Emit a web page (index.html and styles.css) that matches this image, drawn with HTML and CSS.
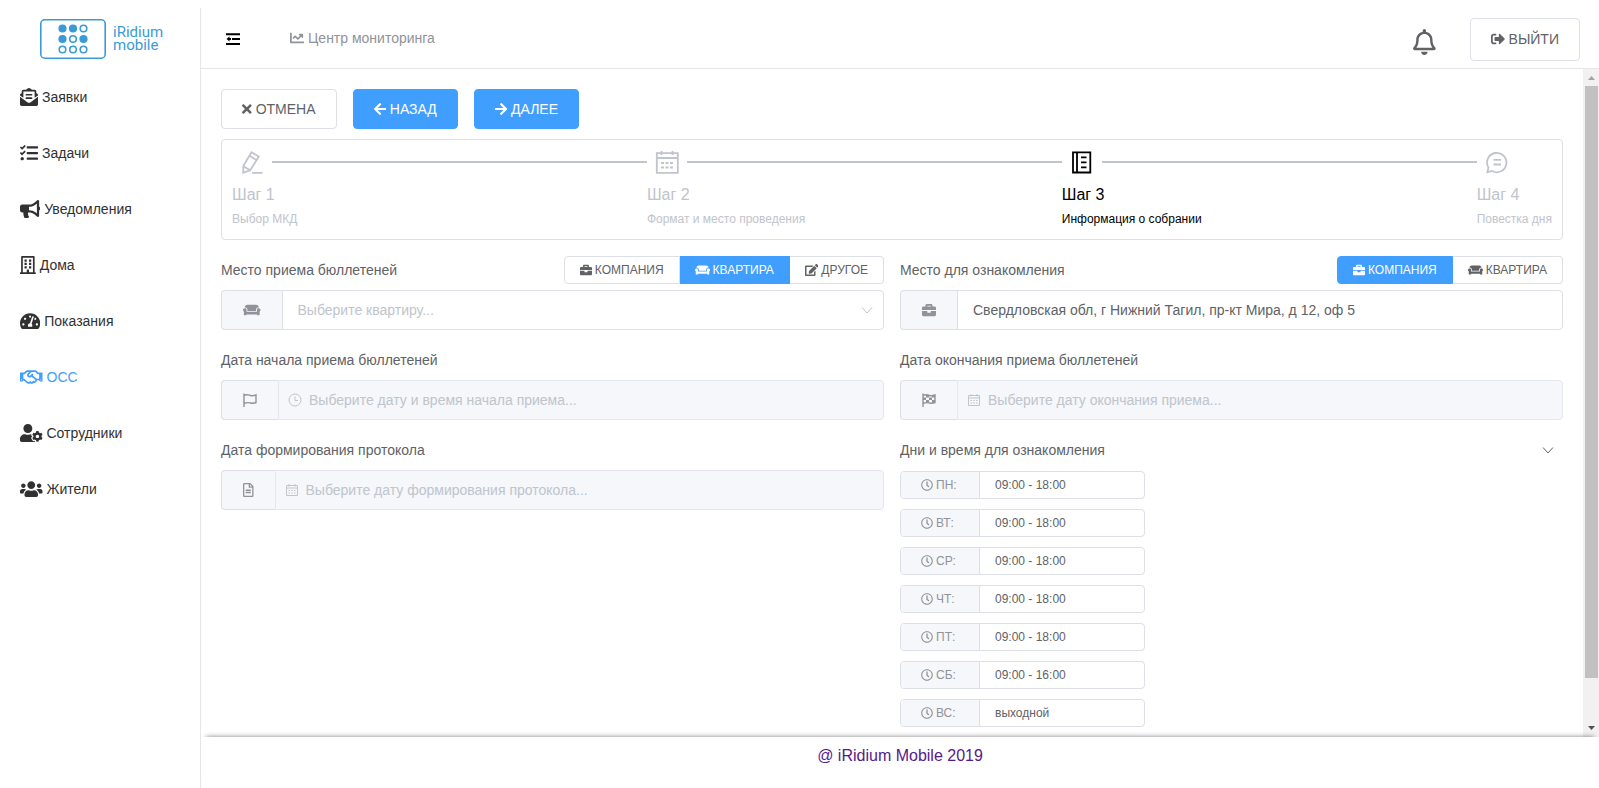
FILE: index.html
```html
<!DOCTYPE html>
<html lang="ru">
<head>
<meta charset="utf-8">
<title>iRidium mobile — ОСС</title>
<link rel="stylesheet" href="styles.css">
</head>
<body>
<svg class="sprite" aria-hidden="true">
  <defs>
    <path id="i-briefcase" d="M320 336c0 8.840-7.160 16-16 16h-96c-8.840 0-16-7.160-16-16v-48H0v144c0 25.600 22.400 48 48 48h416c25.600 0 48-22.400 48-48V288H320v48zm144-208h-80V80c0-25.600-22.400-48-48-48H176c-25.600 0-48 22.400-48 48v48H48c-25.600 0-48 22.400-48 48v80h512v-80c0-25.600-22.400-48-48-48zm-144 0H192V96h128v32z"/>
    <path id="i-couch" d="M160 224v64h320v-64c0-35.300 28.700-64 64-64h32c0-53-43-96-96-96H160c-53 0-96 43-96 96h32c35.300 0 64 28.700 64 64zm416-32h-32c-17.700 0-32 14.300-32 32v96H128v-96c0-17.700-14.300-32-32-32H64c-35.300 0-64 28.700-64 64 0 23.600 13 44 32 55.100V432c0 8.800 7.200 16 16 16h64c8.800 0 16-7.200 16-16v-16h384v16c0 8.800 7.200 16 16 16h64c8.800 0 16-7.200 16-16V311.100c19-11.100 32-31.500 32-55.100 0-35.300-28.700-64-64-64z"/>
    <path id="i-clock" d="M256 8C119 8 8 119 8 256s111 248 248 248 248-111 248-248S393 8 256 8zm0 448c-110.500 0-200-89.500-200-200S145.500 56 256 56s200 89.500 200 200-89.500 200-200 200zm61.800-104.400l-84.900-61.700c-3.100-2.300-4.900-5.900-4.900-9.700V116c0-6.600 5.400-12 12-12h32c6.600 0 12 5.400 12 12v141.700l66.800 48.600c5.400 3.900 6.500 11.400 2.600 16.800L334.600 349c-3.900 5.300-11.400 6.500-16.800 2.600z"/>
    <path id="i-arrow" d="M257.500 445.100l-22.200 22.200c-9.400 9.400-24.600 9.400-33.900 0L7 273c-9.400-9.400-9.400-24.600 0-33.900L201.400 44.700c9.400-9.400 24.600-9.400 33.900 0l22.200 22.200c9.500 9.500 9.300 25-.4 34.300L136.600 216H424c13.300 0 24 10.700 24 24v32c0 13.300-10.700 24-24 24H136.600l120.500 114.800c9.800 9.300 10 24.800.4 34.300z"/>
    <g id="i-date"><path d="M1.500 2.500h11v10h-11zM1.500 5h11M4 1v2.500M10 1v2.500" /><path d="M3.500 7.500h1.500M6.250 7.500h1.500M9 7.500h1.500M3.500 10h1.500M6.250 10h1.500M9 10h1.500"/></g>
    <path id="i-chevron" d="M2 4.500l5 5.500 5-5.500"/>
  </defs>
</svg>

<div class="app">
  <aside class="sidebar">
    <a class="logo" href="#" aria-label="iRidium mobile">
      <svg class="logo-mark" viewBox="0 0 66 40" aria-hidden="true">
        <rect x=".8" y=".8" width="64.400" height="38.400" rx="4" fill="none" stroke="currentColor" stroke-width="1.600"/>
        <g fill="currentColor" stroke="currentColor" stroke-width="1.600">
          <circle cx="22.500" cy="9.500" r="3.300"/><circle cx="33" cy="9.500" r="3.300"/><circle cx="43.500" cy="9.500" r="3.300" fill="none"/>
          <circle cx="22.500" cy="20" r="3.300"/><circle cx="33" cy="20" r="3.300" fill="none"/><circle cx="43.500" cy="20" r="3.300"/>
          <circle cx="22.500" cy="30.500" r="3.300" fill="none"/><circle cx="33" cy="30.500" r="3.300" fill="none"/><circle cx="43.500" cy="30.500" r="3.300" fill="none"/>
        </g>
      </svg>
      <span class="logo-text">iRidium<br>mobile</span>
    </a>
    <nav class="menu">
      <a class="menu-item" href="#"><svg class="icon" viewBox="0 0 512 512"><path d="M176 216h160c8.840 0 16-7.160 16-16v-16c0-8.840-7.160-16-16-16H176c-8.840 0-16 7.160-16 16v16c0 8.840 7.160 16 16 16zm-16 80c0 8.840 7.160 16 16 16h160c8.840 0 16-7.160 16-16v-16c0-8.840-7.160-16-16-16H176c-8.840 0-16 7.160-16 16v16zm96 121.130c-16.420 0-32.840-5.060-46.860-15.190L0 250.860V464c0 26.510 21.490 48 48 48h416c26.510 0 48-21.490 48-48V250.860L302.860 401.940c-14.020 10.120-30.440 15.190-46.860 15.190zm237.610-254.180c-8.850-6.940-17.240-13.470-29.610-22.810V96c0-26.510-21.490-48-48-48h-77.550c-3.040-2.200-5.870-4.260-9.040-6.560C312.600 29.170 279.200-.35 256 0c-23.200-.35-56.590 29.170-73.410 41.440-3.170 2.300-6 4.360-9.040 6.560H96c-26.510 0-48 21.490-48 48v44.140c-12.370 9.330-20.760 15.870-29.610 22.810A47.995 47.995 0 0 0 0 200.720v10.650l96 69.350V96h320v184.720l96-69.350v-10.650c0-14.740-6.780-28.670-18.390-37.770z"/></svg>Заявки</a>
      <a class="menu-item" href="#"><svg class="icon" viewBox="0 0 512 512"><path d="M139.610 35.500a12 12 0 0 0-17 0L58.930 98.810l-22.700-22.120a12 12 0 0 0-17 0L3.530 92.410a12 12 0 0 0 0 17l47.590 47.400a12.780 12.780 0 0 0 17.610 0l15.590-15.620L156.520 69a12.090 12.090 0 0 0 .09-17zm0 159.190a12 12 0 0 0-17 0l-63.680 63.720-22.700-22.100a12 12 0 0 0-17 0L3.530 252a12 12 0 0 0 0 17L51 316.500a12.770 12.770 0 0 0 17.600 0l15.700-15.690 72.200-72.220a12 12 0 0 0 .09-16.900zM64 368c-26.490 0-48.590 21.500-48.590 48S37.530 464 64 464a48 48 0 0 0 0-96zm432 16H208a16 16 0 0 0-16 16v32a16 16 0 0 0 16 16h288a16 16 0 0 0 16-16v-32a16 16 0 0 0-16-16zm0-320H208a16 16 0 0 0-16 16v32a16 16 0 0 0 16 16h288a16 16 0 0 0 16-16V80a16 16 0 0 0-16-16zm0 160H208a16 16 0 0 0-16 16v32a16 16 0 0 0 16 16h288a16 16 0 0 0 16-16v-32a16 16 0 0 0-16-16z"/></svg>Задачи</a>
      <a class="menu-item" href="#"><svg class="icon" viewBox="0 0 576 512"><path d="M576 240c0-23.630-12.950-44.040-32-55.120V32.010C544 23.260 537.020 0 512 0c-7.120 0-14.190 2.380-19.980 7.020l-85.030 68.030C364.280 109.190 310.660 128 256 128H64c-35.350 0-64 28.650-64 64v96c0 35.350 28.650 64 64 64h33.700c-1.390 10.480-2.180 21.140-2.180 32 0 39.770 9.260 77.350 25.560 110.940 5.190 10.690 16.520 17.060 28.400 17.060h74.280c26.050 0 41.690-29.840 25.900-50.560-16.400-21.520-26.150-48.360-26.150-77.440 0-11.110 1.620-21.790 4.410-32H256c54.660 0 108.280 18.810 150.980 52.950l85.030 68.030a32.023 32.023 0 0 0 19.980 7.020c24.920 0 32-22.780 32-32V295.130C563.050 284.040 576 263.630 576 240zm-96 141.420l-33.050-26.440C392.950 311.780 325.120 288 256 288v-96c69.120 0 136.950-23.780 190.950-66.980L480 98.580v282.840z"/></svg>Уведомления</a>
      <a class="menu-item" href="#"><svg class="icon" viewBox="0 0 448 512"><path fill-rule="evenodd" d="M0 476q0-12 12-12h20V24Q32 0 56 0h336q24 0 24 24v440h20q12 0 12 12v36H0zM80 48v416h112v-68q0-12 12-12h40q12 0 12 12v68h112V48z"/><path d="M128 96h64v64h-64zM256 96h64v64h-64zM128 192h64v64h-64zM256 192h64v64h-64zM128 288h64v64h-64zM256 288h64v64h-64z"/></svg>Дома</a>
      <a class="menu-item" href="#"><svg class="icon" viewBox="0 0 576 512"><path d="M288 32C128.940 32 0 160.940 0 320c0 52.800 14.250 102.260 39.060 144.800 5.610 9.620 16.300 15.200 27.440 15.200h443c11.140 0 21.830-5.580 27.440-15.200C561.750 422.260 576 372.800 576 320c0-159.060-128.940-288-288-288zm0 64c14.710 0 26.580 10.130 30.320 23.650-1.110 2.260-2.640 4.230-3.450 6.670l-9.220 27.670c-5.130 3.490-10.970 6.010-17.640 6.010-17.670 0-32-14.330-32-32S270.330 96 288 96zM96 384c-17.670 0-32-14.330-32-32s14.330-32 32-32 32 14.330 32 32-14.330 32-32 32zm48-160c-17.670 0-32-14.330-32-32s14.330-32 32-32 32 14.330 32 32-14.330 32-32 32zm246.770-72.410l-61.330 184C343.130 347.330 352 364.540 352 384c0 11.720-3.380 22.550-8.880 32H232.880c-5.500-9.450-8.880-20.280-8.880-32 0-33.940 26.500-61.430 59.900-63.590l61.340-184.010c4.170-12.560 17.730-19.450 30.360-15.170 12.570 4.190 19.350 17.790 15.170 30.360zm14.660 57.200l15.520-46.550c3.470-1.290 7.130-2.230 11.050-2.230 17.670 0 32 14.330 32 32s-14.330 32-32 32c-11.380-.01-20.890-6.280-26.570-15.220zM480 384c-17.670 0-32-14.330-32-32s14.330-32 32-32 32 14.330 32 32-14.330 32-32 32z"/></svg>Показания</a>
      <a class="menu-item is-active" href="#" aria-current="page"><svg class="icon" viewBox="0 0 640 512"><path d="M519.200 127.900l-47.600-47.600A56.252 56.252 0 0 0 432 64H205.200c-14.800 0-29.100 5.900-39.600 16.300L118 127.900H0v255.700h64c17.600 0 31.800-14.200 31.900-31.700h9.100l84.600 76.400c30.900 25.100 73.800 25.700 105.600 3.800 12.500 10.800 26 15.900 41.100 15.900 18.200 0 35.300-7.400 48.800-24 22.100 8.700 48.200 2.600 64-16.800l26.200-32.300c5.600-6.900 9.100-14.800 10.900-23h57.900c.1 17.500 14.400 31.700 31.900 31.700h64V127.900H519.200zM48 351.600c-8.800 0-16-7.200-16-16s7.200-16 16-16 16 7.200 16 16c0 8.900-7.200 16-16 16zm390-6.900l-26.100 32.200c-2.800 3.400-7.800 4-11.300 1.200l-23.900-19.400-30 36.500c-6 7.300-15 4.800-18 2.400l-36.800-31.500-15.600 19.200c-13.900 17.100-39.200 19.700-55.300 6.600l-97.300-88H96V175.800h41.900l61.700-61.600c2-.8 3.700-1.500 5.700-2.300H262l-38.700 35.500c-29.400 26.900-31.100 72.300-4.400 101.300 14.800 16.200 61.200 41.200 101.500 4.400l8.200-7.500 108.200 87.800c3.400 2.800 3.900 7.900 1.200 11.300zm106-40.800h-69.200c-2.300-2.800-4.900-5.400-7.700-7.700l-102.700-83.400 12.500-11.400c6.500-6 7-16.100 1-22.600L367 167.100c-6-6.500-16.100-6.900-22.600-1l-55.200 50.600c-9.500 8.700-25.700 9.400-34.600 0-9.300-9.900-8.500-25.100 1.200-33.900l65.600-60.100c7.400-6.800 17-10.500 27-10.500l83.700-.2c2.100 0 4.100.8 5.500 2.300l61.700 61.600H544v128zm48 47.700c-8.800 0-16-7.200-16-16s7.200-16 16-16 16 7.200 16 16c0 8.900-7.200 16-16 16z"/></svg>ОСС</a>
      <a class="menu-item" href="#"><svg class="icon" viewBox="0 0 640 512"><path d="M610.500 373.300c2.600-14.100 2.600-28.500 0-42.600l25.800-14.900c3-1.700 4.300-5.200 3.300-8.500-6.700-21.600-18.200-41.200-33.200-57.400-2.300-2.500-6-3.100-9-1.400l-25.800 14.900c-10.900-9.300-23.400-16.500-36.900-21.300v-29.800c0-3.400-2.400-6.400-5.700-7.100-22.300-5-45-4.800-66.200 0-3.300.7-5.700 3.700-5.700 7.100v29.800c-13.500 4.800-26 12-36.900 21.300l-25.800-14.900c-2.900-1.700-6.700-1.100-9 1.400-15 16.200-26.500 35.800-33.200 57.400-1 3.300.4 6.800 3.300 8.500l25.800 14.900c-2.600 14.100-2.600 28.500 0 42.600l-25.800 14.900c-3 1.700-4.300 5.200-3.300 8.500 6.700 21.600 18.200 41.100 33.200 57.400 2.300 2.500 6 3.100 9 1.400l25.800-14.900c10.900 9.300 23.400 16.500 36.900 21.300v29.800c0 3.400 2.400 6.400 5.700 7.100 22.300 5 45 4.800 66.200 0 3.300-.7 5.700-3.700 5.700-7.100v-29.800c13.500-4.800 26-12 36.900-21.300l25.800 14.900c2.900 1.700 6.700 1.100 9-1.400 15-16.200 26.500-35.800 33.200-57.400 1-3.300-.4-6.800-3.300-8.500l-25.800-14.900zM496 400.500c-26.800 0-48.500-21.800-48.500-48.500s21.800-48.500 48.500-48.500 48.500 21.800 48.500 48.500-21.700 48.500-48.500 48.500zM224 256c70.700 0 128-57.300 128-128S294.700 0 224 0 96 57.300 96 128s57.300 128 128 128zm201.200 226.500c-2.300-1.200-4.600-2.600-6.800-3.900l-7.900 4.600c-6 3.400-12.800 5.300-19.600 5.300-10.900 0-21.400-4.600-28.900-12.600-18.300-19.800-32.300-43.900-40.200-69.600-5.500-17.700 1.900-36.400 17.900-45.700l7.900-4.600c-.1-2.600-.1-5.200 0-7.800l-7.900-4.600c-16-9.200-23.400-28-17.900-45.700.9-2.900 2.200-5.800 3.200-8.700-3.800-.3-7.500-1.200-11.400-1.200h-16.700c-22.200 10.200-46.900 16-72.900 16s-50.600-5.800-72.900-16h-16.700C60.200 288 0 348.200 0 422.400V464c0 26.500 21.500 48 48 48h352c10.100 0 19.500-3.200 27.200-8.500-1.200-3.800-2-7.700-2-11.800v-9.200z"/></svg>Сотрудники</a>
      <a class="menu-item" href="#"><svg class="icon" viewBox="0 0 640 512"><path d="M96 224c35.300 0 64-28.700 64-64s-28.700-64-64-64-64 28.700-64 64 28.700 64 64 64zm448 0c35.300 0 64-28.700 64-64s-28.700-64-64-64-64 28.700-64 64 28.700 64 64 64zm32 32h-64c-17.600 0-33.500 7.100-45.100 18.600 40.300 22.100 68.900 62 75.100 109.400h66c17.700 0 32-14.300 32-32v-32c0-35.300-28.700-64-64-64zm-256 0c61.900 0 112-50.100 112-112S381.900 32 320 32 208 82.100 208 144s50.100 112 112 112zm76.800 32h-8.300c-20.800 10-43.900 16-68.500 16s-47.600-6-68.500-16h-8.300C179.600 288 128 339.600 128 403.200V432c0 26.500 21.500 48 48 48h288c26.500 0 48-21.500 48-48v-28.800c0-63.600-51.600-115.200-115.200-115.200zm-223.700-13.400C161.500 263.100 145.600 256 128 256H64c-35.300 0-64 28.700-64 64v32c0 17.700 14.300 32 32 32h65.900c6.300-47.400 34.900-87.300 75.200-109.400z"/></svg>Жители</a>
    </nav>
  </aside>

  <div class="page">
    <header class="topbar">
      <button class="icon-button" type="button" aria-label="Свернуть меню">
        <svg class="icon-sm" viewBox="0 0 14 14"><path d="M0 1.200h14v2H0zM6 6h8v2H6zM0 10.900h14v2H0zM.5 7l3-2.600V6H5v2H3.500v1.600z"/></svg>
      </button>
      <a class="topbar-link" href="#"><svg class="icon-sm" viewBox="0 0 512 512"><path d="M496 384H64V80c0-8.840-7.160-16-16-16H16C7.160 64 0 71.160 0 80v336c0 17.670 14.330 32 32 32h464c8.840 0 16-7.160 16-16v-32c0-8.840-7.160-16-16-16zM464 96H345.940c-21.380 0-32.090 25.850-16.970 40.970l32.400 32.400L288 242.750l-73.370-73.370c-12.500-12.500-32.760-12.500-45.250 0l-68.690 68.690c-6.250 6.250-6.250 16.380 0 22.630l22.620 22.620c6.250 6.250 16.380 6.250 22.630 0L192 237.250l73.370 73.370c12.500 12.500 32.760 12.500 45.250 0l96-96 32.400 32.400c15.120 15.120 40.970 4.410 40.970-16.970V112c.01-8.840-7.150-16-15.990-16z"/></svg>Центр мониторинга</a>
      <div class="topbar-right">
        <button class="icon-button bell" type="button" aria-label="Оповещения">
          <svg class="icon-lg" viewBox="0 0 448 512"><path d="M439.390 362.290c-19.320-20.760-55.470-51.990-55.470-154.290 0-77.700-54.480-139.900-127.940-155.160V32c0-17.670-14.320-32-31.980-32s-31.980 14.330-31.980 32v20.840C118.560 68.100 64.080 130.300 64.080 208c0 102.300-36.150 133.530-55.470 154.290-6 6.450-8.660 14.160-8.610 21.710.11 16.400 12.980 32 32.100 32h383.800c19.120 0 32-15.600 32.100-32 .05-7.550-2.610-15.270-8.610-21.710zM67.530 368c21.220-27.970 44.420-74.330 44.530-159.420 0-.2-.06-.38-.06-.58 0-61.860 50.140-112 112-112s112 50.140 112 112c0 .2-.06.38-.06.58.11 85.100 23.310 131.460 44.530 159.420H67.530zM224 512c35.320 0 63.970-28.650 63.970-64H160.030c0 35.350 28.650 64 63.970 64z"/></svg>
        </button>
        <button class="btn btn-tall" type="button"><svg class="icon-sm" viewBox="0 0 512 512"><path d="M497 273L329 441c-15 15-41 4.500-41-17v-96H152c-13.300 0-24-10.700-24-24v-96c0-13.300 10.700-24 24-24h136V88c0-21.400 25.900-32 41-17l168 168c9.300 9.400 9.300 24.600 0 34zM192 436v-40c0-6.600-5.400-12-12-12H96c-17.700 0-32-14.300-32-32V160c0-17.700 14.300-32 32-32h84c6.600 0 12-5.400 12-12V76c0-6.600-5.400-12-12-12H96c-53 0-96 43-96 96v192c0 53 43 96 96 96h84c6.600 0 12-5.400 12-12z"/></svg>ВЫЙТИ</button>
      </div>
    </header>

    <div class="viewport">
      <main class="content">
        <div class="actions">
          <button class="btn" type="button"><svg class="icon-sm" viewBox="0 0 352 512"><path d="M242.720 256l100.070-100.070c12.280-12.280 12.280-32.190 0-44.480l-22.240-22.240c-12.280-12.280-32.190-12.280-44.480 0L176 189.280 75.930 89.210c-12.280-12.280-32.190-12.280-44.480 0L9.210 111.450c-12.280 12.280-12.280 32.190 0 44.480L109.280 256 9.210 356.070c-12.280 12.280-12.280 32.190 0 44.480l22.240 22.240c12.280 12.280 32.200 12.280 44.480 0L176 322.720l100.070 100.070c12.280 12.280 32.200 12.280 44.480 0l22.240-22.240c12.280-12.280 12.280-32.190 0-44.480L242.720 256z"/></svg>ОТМЕНА</button>
          <button class="btn btn-primary" type="button"><svg class="icon-sm" viewBox="0 0 448 512"><use href="#i-arrow"/></svg>НАЗАД</button>
          <button class="btn btn-primary" type="button"><svg class="icon-sm" viewBox="0 0 448 512"><use href="#i-arrow" transform="translate(448 0) scale(-1 1)"/></svg>ДАЛЕЕ</button>
        </div>

        <ol class="steps">
          <li class="step">
            <div class="step-head"><svg class="step-icon" viewBox="0 0 24 24"><path d="M11.500 2.200l7.300 4.400L10.200 20.300l-7 2.400.2-6.900zM9.500 5.800l7 4.200M3.500 16.200l6.500 4M12 22.800h10.500"/></svg></div>
            <div class="step-title">Шаг 1</div>
            <div class="step-text">Выбор МКД</div>
          </li>
          <li class="step">
            <div class="step-head"><svg class="step-icon" viewBox="0 0 24 24"><path d="M1.800 3.200h21v19.600h-21zM1.800 8h21M6.500 1v4M17.500 1v4"/><path d="M6 13h3M10.500 13h3M15 13h3M6 17.500h3M10.500 17.500h3M15 17.500h3"/></svg></div>
            <div class="step-title">Шаг 2</div>
            <div class="step-text">Формат и место проведения</div>
          </li>
          <li class="step is-current" aria-current="step">
            <div class="step-head"><svg class="step-icon" viewBox="0 0 24 24"><path d="M3 2.300h17.300v20.200H3zM7 2.300v20.200M11 7.300h5.500M11 12.300h5.500M11 17.300h5.500"/></svg></div>
            <div class="step-title">Шаг 3</div>
            <div class="step-text">Информация о собрании</div>
          </li>
          <li class="step">
            <div class="step-head"><svg class="step-icon" viewBox="0 0 24 24"><path d="M3.400 17.500A9.700 9.700 0 1 1 7 21l-4.600 1.200zM8.500 9.800h7.500M8.500 14.500h7.500"/></svg></div>
            <div class="step-title">Шаг 4</div>
            <div class="step-text">Повестка дня</div>
          </li>
        </ol>

        <form class="form">
          <div class="field">
            <div class="field-head">
              <label for="receive">Место приема бюллетеней</label>
              <div class="segments" role="group" aria-label="Место приема бюллетеней">
                <button class="segment" type="button"><svg class="icon-xs" viewBox="0 0 512 512"><use href="#i-briefcase"/></svg>КОМПАНИЯ</button>
                <button class="segment is-on" type="button" aria-pressed="true"><svg class="icon-xs" viewBox="0 0 640 512"><use href="#i-couch"/></svg>КВАРТИРА</button>
                <button class="segment" type="button"><svg class="icon-xs" viewBox="0 0 576 512"><path d="M402.600 83.200l90.200 90.200c3.800 3.800 3.800 10 0 13.800L274.400 405.600l-92.800 10.300c-12.400 1.400-22.900-9.100-21.500-21.500l10.300-92.800L388.800 83.200c3.800-3.800 10-3.800 13.800 0zm162-22.900l-48.800-48.800c-15.200-15.200-39.900-15.200-55.200 0l-35.400 35.400c-3.800 3.800-3.800 10 0 13.800l90.200 90.200c3.800 3.800 10 3.800 13.800 0l35.400-35.400c15.200-15.300 15.200-40 0-55.200zM384 346.200V448H64V128h229.800c3.200 0 6.200-1.300 8.500-3.500l40-40c7.600-7.600 2.200-20.500-8.500-20.500H48C21.500 64 0 85.500 0 112v352c0 26.500 21.500 48 48 48h352c26.500 0 48-21.500 48-48V306.200c0-10.700-12.900-16-20.500-8.500l-40 40c-2.200 2.300-3.500 5.300-3.500 8.500z"/></svg>ДРУГОЕ</button>
              </div>
            </div>
            <div class="input-group">
              <span class="prepend"><svg class="icon-sm" viewBox="0 0 640 512"><use href="#i-couch"/></svg></span>
              <div class="control">
                <select class="input is-placeholder" id="receive"><option>Выберите квартиру...</option></select>
                <svg class="line-icon suffix" viewBox="0 0 14 14"><use href="#i-chevron"/></svg>
              </div>
            </div>
          </div>

          <div class="field">
            <div class="field-head">
              <label for="review">Место для ознакомления</label>
              <div class="segments" role="group" aria-label="Место для ознакомления">
                <button class="segment is-on" type="button" aria-pressed="true"><svg class="icon-xs" viewBox="0 0 512 512"><use href="#i-briefcase"/></svg>КОМПАНИЯ</button>
                <button class="segment" type="button"><svg class="icon-xs" viewBox="0 0 640 512"><use href="#i-couch"/></svg>КВАРТИРА</button>
              </div>
            </div>
            <div class="input-group">
              <span class="prepend"><svg class="icon-sm" viewBox="0 0 512 512"><use href="#i-briefcase"/></svg></span>
              <div class="control"><input class="input" id="review" type="text" value="Свердловская обл, г Нижний Тагил, пр-кт Мира, д 12, оф 5"></div>
            </div>
          </div>

          <div class="field">
            <div class="field-head"><label for="start">Дата начала приема бюллетеней</label></div>
            <div class="input-group">
              <span class="prepend"><svg class="icon-sm line-icon is-bold" viewBox="0 0 14 14"><path d="M1 .5v13.500M1 2.500c3-1.500 4.500-.5 6.500 0s3.500.3 5.500-.6v7.600c-2 .9-3.500 1-5.500.5S4 9 1 10.600"/></svg></span>
              <div class="control">
                <svg class="line-icon prefix" viewBox="0 0 14 14"><path d="M7 1a6 6 0 1 1 0 12A6 6 0 0 1 7 1zM7 3.500V7.500h3"/></svg>
                <input class="input has-prefix" id="start" type="text" placeholder="Выберите дату и время начала приема..." disabled>
              </div>
            </div>
          </div>

          <div class="field">
            <div class="field-head"><label for="end">Дата окончания приема бюллетеней</label></div>
            <div class="input-group">
              <span class="prepend"><svg class="icon-sm line-icon is-bold" viewBox="0 0 14 14"><path d="M1 .5v13.500M1 2.500c3-1.500 4.500-.5 6.500 0s3.500.3 5.500-.6v7.600c-2 .9-3.500 1-5.500.5S4 9 1 10.600"/><path class="solid" d="M4 1.800h3v2.600H4zM10 2.200h3v2.200h-3zM1 4.400h3V7H1zM7 4.400h3V7H7zM4 7h3v2.600H4zM10 7h3v2.400h-3z"/></svg></span>
              <div class="control">
                <svg class="line-icon prefix" viewBox="0 0 14 14"><use href="#i-date"/></svg>
                <input class="input has-prefix" id="end" type="text" placeholder="Выберите дату окончания приема..." disabled>
              </div>
            </div>
          </div>

          <div class="field">
            <div class="field-head"><label for="protocol">Дата формирования протокола</label></div>
            <div class="input-group">
              <span class="prepend"><svg class="icon-sm" viewBox="0 0 384 512"><path d="M288 248v28c0 6.600-5.400 12-12 12H108c-6.600 0-12-5.400-12-12v-28c0-6.600 5.400-12 12-12h168c6.600 0 12 5.400 12 12zm-12 72H108c-6.600 0-12 5.400-12 12v28c0 6.600 5.400 12 12 12h168c6.600 0 12-5.400 12-12v-28c0-6.600-5.400-12-12-12zm108-188.100V464c0 26.500-21.500 48-48 48H48c-26.500 0-48-21.500-48-48V48C0 21.500 21.500 0 48 0h204.100C264.800 0 277 5.100 286 14.100L369.900 98c9 8.900 14.100 21.200 14.100 33.900zm-128-80V128h76.100L256 51.900zM336 464V176H232c-13.300 0-24-10.700-24-24V48H48v416h288z"/></svg></span>
              <div class="control">
                <svg class="line-icon prefix" viewBox="0 0 14 14"><use href="#i-date"/></svg>
                <input class="input has-prefix" id="protocol" type="text" placeholder="Выберите дату формирования протокола..." disabled>
              </div>
            </div>
          </div>

          <div class="field">
            <button class="collapse-head" type="button" aria-expanded="true">Дни и время для ознакомления<svg class="line-icon" viewBox="0 0 14 14"><use href="#i-chevron"/></svg></button>
            <div class="days">
              <div class="day"><label class="day-name" for="d1"><svg class="icon-xs" viewBox="0 0 512 512"><use href="#i-clock"/></svg>ПН:</label><input class="day-time" id="d1" value="09:00 - 18:00"></div>
              <div class="day"><label class="day-name" for="d2"><svg class="icon-xs" viewBox="0 0 512 512"><use href="#i-clock"/></svg>ВТ:</label><input class="day-time" id="d2" value="09:00 - 18:00"></div>
              <div class="day"><label class="day-name" for="d3"><svg class="icon-xs" viewBox="0 0 512 512"><use href="#i-clock"/></svg>СР:</label><input class="day-time" id="d3" value="09:00 - 18:00"></div>
              <div class="day"><label class="day-name" for="d4"><svg class="icon-xs" viewBox="0 0 512 512"><use href="#i-clock"/></svg>ЧТ:</label><input class="day-time" id="d4" value="09:00 - 18:00"></div>
              <div class="day"><label class="day-name" for="d5"><svg class="icon-xs" viewBox="0 0 512 512"><use href="#i-clock"/></svg>ПТ:</label><input class="day-time" id="d5" value="09:00 - 18:00"></div>
              <div class="day"><label class="day-name" for="d6"><svg class="icon-xs" viewBox="0 0 512 512"><use href="#i-clock"/></svg>СБ:</label><input class="day-time" id="d6" value="09:00 - 16:00"></div>
              <div class="day"><label class="day-name" for="d7"><svg class="icon-xs" viewBox="0 0 512 512"><use href="#i-clock"/></svg>ВС:</label><input class="day-time" id="d7" value="выходной"></div>
            </div>
          </div>
        </form>
      </main>
      <div class="scrollbar" aria-hidden="true">
        <svg class="scroll-arrow is-dim" viewBox="0 0 16 17"><path d="M5 11h7L8.500 7z"/></svg>
        <div class="scroll-thumb"></div>
        <div class="scroll-rest"></div>
        <svg class="scroll-arrow" viewBox="0 0 16 17"><path d="M5 6h7l-3.500 4z"/></svg>
      </div>
    </div>

    <footer class="footer"><a class="footer-link" href="#">@ iRidium Mobile 2019</a></footer>
  </div>
</div>
</body>
</html>
```

FILE: styles.css
```css
* { box-sizing: border-box; }

body {
  margin: 0;
  background: #fff;
  color: #606266;
  font-family: "Liberation Sans", Arial, sans-serif;
  font-size: 14px;
}

button, input, select { font: inherit; color: inherit; margin: 0; }
button { cursor: pointer; }
a { text-decoration: none; }
svg { fill: currentColor; flex: none; display: block; }

.sprite { position: absolute; width: 0; height: 0; }
.icon { height: 18px; }
.icon-lg { height: 26px; }
.icon-sm { height: 14px; }
.icon-xs { height: 12px; }
.line-icon {
  width: 14px;
  height: 14px;
  fill: none;
  stroke: currentColor;
}
.line-icon.is-bold { stroke-width: 1.4; }
.solid { fill: currentColor; stroke: none; }

.app { display: flex; height: 100vh; padding-top: 8px; }

/* Sidebar */
.sidebar { width: 201px; flex: none; border-right: 1px solid #e6e6e6; }
.logo {
  display: flex;
  align-items: center;
  gap: 7px;
  height: 61px;
  padding-left: 40px;
  color: #3a9bd5;
}
.logo-mark { width: 66px; height: 40px; }
.logo-text { padding-top: 1px; font: 15px/13px Roboto, sans-serif; }
.menu-item {
  display: flex;
  align-items: center;
  gap: 4px;
  height: 56px;
  padding-left: 20px;
  color: #303133;
}
.menu-item.is-active { color: #409eff; }

/* Top bar */
.page { flex: 1; min-width: 0; display: flex; flex-direction: column; }
.topbar {
  display: flex;
  align-items: center;
  height: 61px;
  flex: none;
  padding: 0 19px 0 25px;
  border-bottom: 1px solid #e6e6e6;
}
.icon-button { padding: 2px 0 0; border: 0; background: none; color: #000; }
.topbar-link { display: flex; align-items: center; gap: 4px; margin-left: 50px; color: #909399; }
.topbar-right { display: flex; align-items: center; gap: 34px; margin-left: auto; padding-top: 2px; }
.bell { color: #606266; padding-top: 6px; }

.btn {
  display: flex;
  align-items: center;
  gap: 4px;
  height: 40px;
  padding: 0 20px;
  border: 1px solid #dcdfe6;
  border-radius: 4px;
  background: #fff;
}
.btn-tall { height: 43px; }
.btn-primary { background: #409eff; border-color: #409eff; color: #fff; }

/* Scrolling area */
.viewport { flex: 1; min-height: 0; display: flex; }
.content { flex: 1; min-width: 0; overflow: hidden; padding: 20px 20px 0; }
.scrollbar { width: 16px; display: flex; flex-direction: column; background: #f1f1f1; }
.scroll-arrow { width: 16px; height: 17px; color: #505050; }
.scroll-arrow.is-dim { color: #a3a3a3; }
.scroll-thumb { flex: 14; margin: 0 1px 0 2px; background: #c1c1c1; }
.scroll-rest { flex: 1; }

.actions { display: flex; gap: 16px; }

/* Steps */
.steps {
  display: flex;
  margin: 10px 0 0;
  padding: 10px;
  list-style: none;
  border: 1px solid #dcdfe6;
  border-radius: 4px;
  color: #c0c4cc;
}
.step { flex: 1; white-space: nowrap; }
.step:last-child { flex: none; }
.step-head { display: flex; align-items: center; }
.step-icon {
  width: 24px;
  height: 24px;
  margin: 0 8px;
  fill: none;
  stroke: currentColor;
  stroke-width: 1.8;
}
.step:not(:last-child) .step-head::after {
  content: "";
  flex: 1;
  height: 2px;
  background: #c0c4cc;
}
.step-title { margin-top: 8px; font-size: 16px; line-height: 26px; }
.step-text { margin-top: 1px; font-size: 12px; line-height: 20px; }
.step.is-current { color: #000; }

/* Form */
.form {
  display: grid;
  grid-template-columns: 1fr 1fr;
  gap: 10px 16px;
  margin-top: 10px;
}
.field { min-width: 0; }
.field-head { display: flex; align-items: center; justify-content: space-between; height: 40px; }
.segments { display: flex; font-size: 12px; }
.segment {
  display: flex;
  align-items: center;
  gap: 3px;
  height: 28px;
  padding: 0 15px;
  border: 1px solid #dcdfe6;
  border-left-width: 0;
  background: #fff;
}
.segment:first-child { border-left-width: 1px; border-radius: 4px 0 0 4px; }
.segment:last-child { border-radius: 0 4px 4px 0; }
.segment.is-on { background: #409eff; border-color: #409eff; color: #fff; }

.input-group { display: flex; height: 40px; }
.prepend {
  display: flex;
  align-items: center;
  padding: 0 21px;
  border: 1px solid #dcdfe6;
  border-right: 0;
  border-radius: 4px 0 0 4px;
  background: #f5f7fa;
  color: #909399;
}
.control { position: relative; flex: 1; min-width: 0; }
.input {
  width: 100%;
  height: 40px;
  padding: 0 15px;
  border: 1px solid #dcdfe6;
  border-radius: 0 4px 4px 0;
  background: #fff;
  appearance: none;
}
.input.has-prefix { padding-left: 30px; }
.input:disabled { background: #f5f7fa; border-color: #e4e7ed; }
.input::placeholder { color: #c0c4cc; }
.input.is-placeholder { color: #c0c4cc; }
.prefix, .suffix { position: absolute; top: 13px; color: #c0c4cc; }
.prefix { left: 10px; }
.suffix { right: 10px; }

.collapse-head {
  display: flex;
  align-items: center;
  justify-content: space-between;
  width: 100%;
  height: 40px;
  padding: 0 8px 0 0;
  border: 0;
  background: none;
}
.days {
  display: grid;
  grid-template-columns: minmax(0, 245px);
  gap: 10px;
  padding-top: 1px;
  font-size: 12px;
}
.day { display: flex; height: 28px; border: 1px solid #dcdfe6; border-radius: 4px; }
.day-name {
  display: flex;
  align-items: center;
  gap: 3px;
  width: 79px;
  flex: none;
  padding-left: 20px;
  border-right: 1px solid #dcdfe6;
  border-radius: 3px 0 0 3px;
  background: #f5f7fa;
  color: #909399;
}
.day-time { flex: 1; min-width: 0; padding: 0 15px; border: 0; background: none; }

/* Footer */
.footer {
  flex: none;
  position: relative;
  height: 51px;
  padding-top: 10px;
  background: #fff;
  box-shadow: 0 -5px 5px -5px rgba(0, 0, 0, .5);
  text-align: center;
  font-size: 16px;
}
.footer-link { color: #551a8b; }
```
